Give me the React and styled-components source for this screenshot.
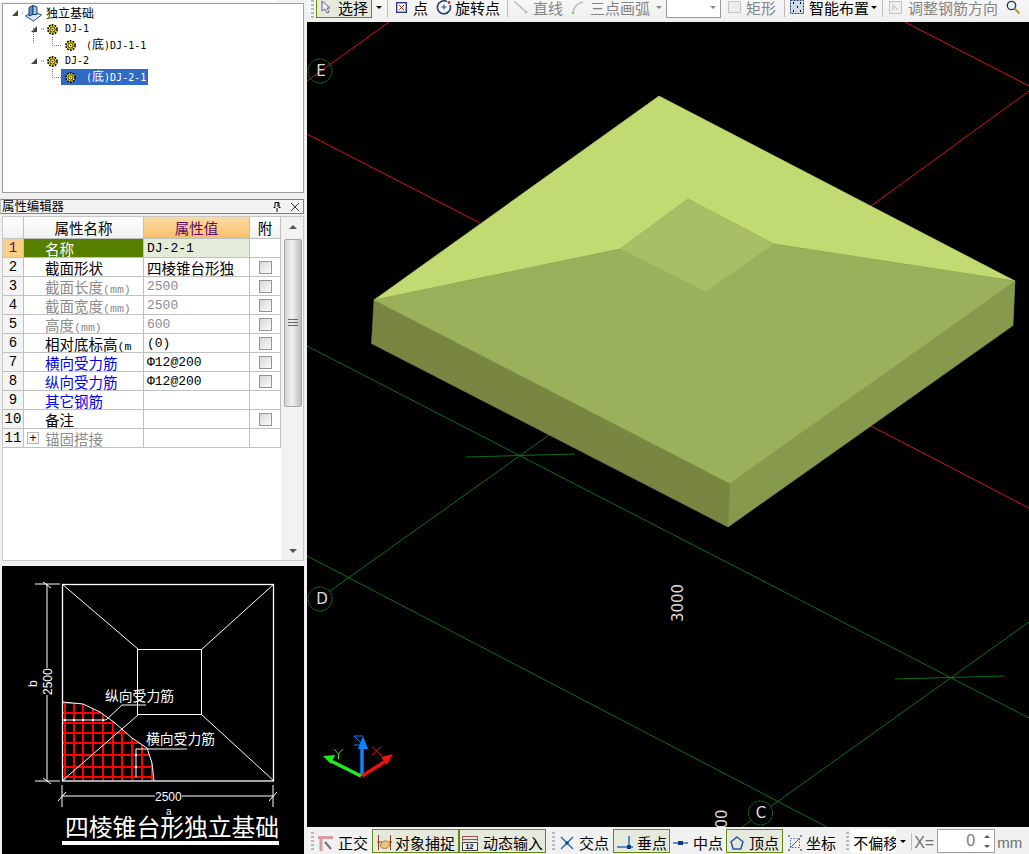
import React from 'react';
import styled, { createGlobalStyle } from 'styled-components';

const GlobalStyle = createGlobalStyle`
  html, body { margin: 0; padding: 0; background: #f0f0f0; overflow: hidden; }
  #root { width: 1029px; height: 854px; }
`;

const FONT = `"Noto Sans CJK SC", "DejaVu Sans", sans-serif`;
const MONO = `"Liberation Mono", "Noto Sans CJK SC", monospace`;
const LATIN = `"Liberation Sans", sans-serif`;

const Shell = styled.div`
  display: grid;
  grid-template-columns: 307px 722px;
  width: 1029px;
  height: 854px;
  overflow: hidden;
  font-family: ${FONT};
  color: #000;
`;

const Sidebar = styled.div`
  display: flex;
  flex-direction: column;
  background: #f0f0f0;
  padding-right: 3px;
  min-height: 0;
`;

const TopEdge = styled.div`
  width: 277px;
  height: 2px;
  margin-bottom: 1px;
  background: #fff;
  flex: none;
`;

const TreePanel = styled.div`
  height: 190px;
  margin-left: 2px;
  padding-top: 1px;
  box-sizing: border-box;
  background: #fff;
  border: 1px solid #a0a0a0;
  flex: none;
`;

const TreeRow = styled.div`
  display: flex;
  align-items: center;
  height: 16px;
  padding-left: ${p => p.$indent}px;
`;

const RootLabel = styled.span`
  margin-left: 4px;
  font-size: 12px;
  line-height: 16px;
`;

const TreeText = styled.span`
  margin-left: 7px;
  font: 10px/16px "DejaVu Sans Mono", monospace;
`;

const LeafBand = styled.span`
  display: flex;
  align-items: center;
  gap: 10px;
  height: 16px;
  margin-left: -1px;
  padding: 0 2px 0 4px;
  font: 10px/16px "DejaVu Sans Mono", monospace;
  background: ${p => p.$selected ? '#316ac5' : 'transparent'};
  color: ${p => p.$selected ? '#fff' : '#000'};
`;

const Cjk = styled.span`
  font: 12px/16px ${FONT};
`;

const ExpandMark = styled.svg`
  margin-right: 4px;
  flex: none;
`;

const LinkDots = styled.svg`
  margin-right: ${p => p.$gap}px;
  flex: none;
  overflow: visible;
`;

const PanelHeader = styled.div`
  display: flex;
  align-items: center;
  justify-content: space-between;
  height: 15px;
  margin-top: 6px;
  box-sizing: border-box;
  border: 1px solid #808080;
  border-left-color: #c4c4c4;
  background: #f3f3f3;
  padding: 0 4px 0 1px;
  font-size: 12.4px;
  line-height: 13px;
  flex: none;
`;

const HeaderIcons = styled.div`
  display: flex;
  gap: 10px;
  align-items: center;
`;

const GridFrame = styled.div`
  display: grid;
  grid-template-columns: 278px 1fr;
  height: 345px;
  margin-top: 2px;
  margin-left: 2px;
  background: #fff;
  border: 1px solid #c8c8c8;
  box-sizing: border-box;
  flex: none;
`;

const Table = styled.div`
  display: grid;
  grid-template-columns: 21px 120px 106px 31px;
  grid-template-rows: 22px;
  grid-auto-rows: 19px;
  align-content: start;
`;

const Cell = styled.div`
  display: flex;
  align-items: center;
  border-right: 1px solid #c0c0c0;
  border-bottom: 1px solid #c0c0c0;
  box-sizing: border-box;
  white-space: nowrap;
  overflow: hidden;
  font-size: 14.5px;
`;

const NumCell = styled(Cell)`
  justify-content: center;
  font-family: ${MONO};
  font-size: 14px;
  background: ${p => p.$active ? '#f8cf87' : '#f4f4f4'};
  color: ${p => p.$active ? '#5c0a6e' : '#000'};
`;

const toneColor = { blue: '#0000f0', gray: '#8c8c8c' };

const NameCell = styled(Cell)`
  padding-left: ${p => p.$expand ? '3px' : '21px'};
  gap: 6px;
  background: ${p => p.$active ? '#568000' : '#fff'};
  color: ${p => p.$active ? '#fff' : toneColor[p.$tone] || '#000'};
`;

const UnitSuffix = styled.span`
  font: 11.6px ${MONO};
`;

const ValueCell = styled(Cell)`
  padding-left: 3px;
  background: ${p => p.$active ? '#e3ebd9' : '#fff'};
  color: ${p => toneColor[p.$tone] || '#000'};
  font-family: ${p => p.$mono ? MONO : FONT};
  font-size: ${p => p.$mono ? '13px' : '14.5px'};
`;

const TickCell = styled(Cell)`
  justify-content: center;
`;

const HeadCell = styled(Cell)`
  justify-content: center;
  background: ${p => p.$accent ? 'linear-gradient(#fbdca6, #f6c069)' : 'linear-gradient(#fff, #f1f1f1)'};
  color: ${p => p.$accent ? '#5c0a6e' : '#000'};
`;

const Tick = styled.span`
  width: 13px;
  height: 13px;
  box-sizing: border-box;
  border: 1px solid #949494;
  background: linear-gradient(135deg, #d8d8d8, #fafafa);
`;

const Expander = styled.span`
  width: 12px;
  height: 12px;
  box-sizing: border-box;
  border: 1px solid #b8b8b8;
  background: #f4f4f4;
  color: #000;
  font: 12px/10px ${LATIN};
  text-align: center;
`;

const ScrollBar = styled.div`
  display: flex;
  flex-direction: column;
  align-items: center;
  background: #f2f2f2;
  padding: 0 0 7px 1px;
`;

const ScrollArrow = styled.span`
  width: 0;
  height: 0;
  margin: ${p => p.$down ? '0' : '8px 0 10px'};
  border-left: 4px solid transparent;
  border-right: 4px solid transparent;
  ${p => p.$down ? 'border-top: 4px solid #555;' : 'border-bottom: 4px solid #555;'}
`;

const ScrollThumb = styled.div`
  width: 18px;
  height: 168px;
  box-sizing: border-box;
  border: 1px solid #a8a8a8;
  border-radius: 2px;
  background: linear-gradient(90deg, #d4d4d4, #f0f0f0 45%, #bcbcbc);
  display: flex;
  align-items: center;
  justify-content: center;
`;

const ThumbGrip = styled.span`
  width: 10px;
  height: 8px;
  background: repeating-linear-gradient(#666 0 1px, transparent 1px 3px);
`;

const ScrollTrack = styled.div`
  flex: 1;
`;

const Preview = styled.div`
  height: 288px;
  margin-top: 5px;
  margin-left: 2px;
  background: #000;
  flex: none;
`;

const Main = styled.div`
  display: flex;
  flex-direction: column;
  min-width: 0;
`;

const TopBarRow = styled.div`
  display: flex;
  align-items: center;
  flex: none;
  height: 22px;
  box-sizing: border-box;
  padding-bottom: 8px;
  background: linear-gradient(#f7f7f7, #efefef);
  white-space: nowrap;
  font-size: 15px;
  overflow: hidden;
`;

const StatusRow = styled.div`
  display: flex;
  align-items: stretch;
  flex: none;
  height: 27px;
  box-sizing: border-box;
  padding: 2px 0 1px;
  background: #f1f1f1;
  white-space: nowrap;
  font-size: 15px;
  overflow: hidden;
`;

const Grip = styled.span`
  width: 3px;
  height: 18px;
  margin: auto ${p => p.$mr ?? 0}px auto ${p => p.$ml ?? 0}px;
  flex: none;
  background: repeating-linear-gradient(#b8b8b8 0 2px, transparent 2px 4px);
`;

const Tool = styled.span`
  display: flex;
  align-items: center;
  gap: ${p => p.$gap ?? 5}px;
  padding-left: ${p => p.$pl ?? 0}px;
  padding-right: ${p => p.$pr ?? 0}px;
  flex: none;
  color: ${p => p.$off ? '#858585' : '#000'};
  ${p => p.$on && 'background: #e6eadd; border: 1px solid #5f8a12;'}
`;

const TopTool = styled(Tool)`
  height: ${p => p.$on ? '22px' : 'auto'};
  box-sizing: border-box;
`;

const StatusTool = styled(Tool)`
  padding-top: 3px;
  box-sizing: border-box;
`;

const Divider = styled.span`
  width: 1px;
  height: 17px;
  margin: auto 5px;
  flex: none;
  background: #bdbdbd;
`;

const Caret = styled.span`
  width: 0;
  height: 0;
  flex: none;
  margin: auto 0 auto ${p => p.$ml ?? 0}px;
  border-left: 3px solid transparent;
  border-right: 3px solid transparent;
  border-top: 3px solid ${p => p.$off ? '#888' : '#000'};
`;

const ComboBox = styled.span`
  display: flex;
  align-items: center;
  justify-content: flex-end;
  width: 55px;
  height: 22px;
  margin-left: 4px;
  box-sizing: border-box;
  padding-right: 4px;
  border: 1px solid #9a9a9a;
  background: #fff;
  flex: none;
`;

const Viewport = styled.div`
  flex: 1;
  min-height: 0;
  background: #000;
`;

const Canvas = styled.svg`
  display: block;
  width: 722px;
  height: 805px;
`;

const BarGap = styled.span`
  width: 5px;
  flex: none;
`;

const OffsetSelect = styled.span`
  width: 45px;
  margin-left: 2px;
  padding: 3px 0 0 2px;
  box-sizing: border-box;
  background: #fff;
  overflow: hidden;
  flex: none;
`;

const NumberBox = styled.span`
  display: flex;
  align-items: center;
  justify-content: flex-end;
  gap: 8px;
  width: 58px;
  margin-left: 3px;
  box-sizing: border-box;
  border: 1px solid #a0a0a0;
  background: #fff;
  color: #7a7a7a;
  padding-right: 3px;
  font: 16px ${LATIN};
  flex: none;
`;

const Spinner = styled.span`
  display: flex;
  flex-direction: column;
  gap: 7px;
  width: 8px;
  align-items: center;
`;

const SpinUp = styled.span`
  width: 0;
  height: 0;
  border-left: 3px solid transparent;
  border-right: 3px solid transparent;
  border-bottom: 3px solid #555;
`;

const SpinDown = styled.span`
  width: 0;
  height: 0;
  border-left: 3px solid transparent;
  border-right: 3px solid transparent;
  border-top: 3px solid #555;
`;

const UnitText = styled.span`
  font: ${p => p.$size}px ${LATIN};
  color: #6e6e6e;
  margin: auto 0 auto ${p => p.$ml}px;
  padding-top: 3px;
`;

const Gear = () => (
  <svg width="11" height="11" viewBox="0 0 11 11" style={{ flex: 'none' }}>
    <circle cx="5.5" cy="5.5" r="4.6" fill="#ffe600" stroke="#000" strokeWidth="1.6" strokeDasharray="1.8 1.1" />
    <circle cx="5.5" cy="5.5" r="2.6" fill="#ffe600" stroke="#333" />
    <circle cx="5.5" cy="5.5" r="0.8" fill="#333" />
  </svg>
);

const Expand = () => (
  <ExpandMark width="6" height="6" viewBox="0 0 6 6"><path d="M0 6h6V0z" fill="#444" /></ExpandMark>
);

const CubeIcon = () => (
  <svg width="17" height="17" viewBox="0 0 17 17" style={{ flex: 'none' }}>
    <path d="M0.5 11l8-4.5 8 3.5-8 6z" fill="#dbe8f6" stroke="#1c4f8c" />
    <path d="M4 2.5l4-2v9l-4 1.5z" fill="#5c8fc8" stroke="#173f72" />
    <path d="M8 .5l4 1.5v7.5l-4 0z" fill="#a4c4e6" stroke="#173f72" />
  </svg>
);

const treeNodes = [
  { name: 'DJ-1', leaf: '-1-1', leafId: 'DJ', withTail: true },
  { name: 'DJ-2', leaf: '-2-1', leafId: 'DJ', selected: true },
];

const rows = [
  { n: 1, name: '名称', value: 'DJ-2-1', active: true, mono: true },
  { n: 2, name: '截面形状', value: '四棱锥台形独', tick: true },
  { n: 3, name: '截面长度', unit: '(mm)', value: '2500', tone: 'gray', valueMono: true, tick: true },
  { n: 4, name: '截面宽度', unit: '(mm)', value: '2500', tone: 'gray', valueMono: true, tick: true },
  { n: 5, name: '高度', unit: '(mm)', value: '600', tone: 'gray', valueMono: true, tick: true },
  { n: 6, name: '相对底标高', unit: '(m', value: '(0)', mono: true, tick: true },
  { n: 7, name: '横向受力筋', value: 'Φ12@200', tone: 'blue', tick: true, mono: true },
  { n: 8, name: '纵向受力筋', value: 'Φ12@200', tone: 'blue', tick: true, mono: true },
  { n: 9, name: '其它钢筋', value: '', tone: 'blue' },
  { n: 10, name: '备注', value: '', tick: true },
  { n: 11, name: '锚固搭接', value: '', tone: 'gray', expand: true },
];

function Tree() {
  return (
    <TreePanel>
      <TreeRow $indent={9}>
        <Expand />
        <LinkDots width="2" height="2" $gap={1}><path d="M0 1H2" stroke="#777" strokeDasharray="1 1" /></LinkDots>
        <CubeIcon />
        <RootLabel>独立基础</RootLabel>
      </TreeRow>
      {treeNodes.map(node => (
        <React.Fragment key={node.name}>
          <TreeRow $indent={28}>
            <Expand />
            <LinkDots width="4" height="2" $gap={2}><path d="M0 1H4" stroke="#777" strokeDasharray="1 1" /></LinkDots>
            <Gear />
            <TreeText>{node.name}</TreeText>
          </TreeRow>
          <TreeRow $indent={30}>
            <LinkDots width="29" height="16" $gap={0}>
              {node.withTail && <path d="M.5 -9V7" stroke="#777" strokeDasharray="1 1" />}
              <path d="M19.5 0V8.5H29" fill="none" stroke="#777" strokeDasharray="1 1" />
            </LinkDots>
            <LeafBand $selected={node.selected}>
              <Gear />
              <span>(<Cjk>底</Cjk>){node.leafId}{node.leaf}</span>
            </LeafBand>
          </TreeRow>
        </React.Fragment>
      ))}
    </TreePanel>
  );
}

function PropertyGrid() {
  return (
    <GridFrame>
      <Table>
        <HeadCell />
        <HeadCell>属性名称</HeadCell>
        <HeadCell $accent>属性值</HeadCell>
        <HeadCell>附</HeadCell>
        {rows.map(r => (
          <React.Fragment key={r.n}>
            <NumCell $active={r.active}>{r.n}</NumCell>
            <NameCell $active={r.active} $tone={r.tone} $expand={r.expand}>
              {r.expand && <Expander>+</Expander>}
              <span>{r.name}{r.unit && <UnitSuffix>{r.unit}</UnitSuffix>}</span>
            </NameCell>
            <ValueCell $active={r.active} $tone={r.value.startsWith('Φ') ? undefined : r.tone} $mono={r.mono || r.valueMono}>{r.value}</ValueCell>
            <TickCell>{r.tick && <Tick />}</TickCell>
          </React.Fragment>
        ))}
      </Table>
      <ScrollBar>
        <ScrollArrow />
        <ScrollThumb><ThumbGrip /></ScrollThumb>
        <ScrollTrack />
        <ScrollArrow $down />
      </ScrollBar>
    </GridFrame>
  );
}

// hatch lines of the rebar sample in the preview picture
const hatchV = [65, 74, 83, 93, 103, 113, 122, 132, 142, 152];
const hatchH = [703, 713, 723, 733, 743, 755, 767, 777];
const rebarEdge = 'M63 702L83 704L100 712L115 723L132 738L147 748L152 763L154 781';

function PreviewDrawing() {
  return (
    <svg width="302" height="288" viewBox="2 566 302 288" style={{ display: 'block' }}>
      <defs>
        <clipPath id="rebar">
          <path d={`${rebarEdge}H63Z`} />
        </clipPath>
      </defs>
      <g clipPath="url(#rebar)" stroke="#f00" strokeWidth="2">
        {hatchV.map(x => <path key={x} d={`M${x} 700V780`} />)}
        {hatchH.map(y => <path key={y} d={`M60 ${y}H160`} />)}
      </g>
      <g fill="none" stroke="#fff" strokeWidth="1">
        <rect x="62.5" y="584.5" width="211" height="196.5" strokeWidth="1.3" />
        <rect x="137.5" y="649.5" width="64" height="65" />
        <path d="M62 584l76 65M274 584l-72 65M62 781l76-66M274 781l-72-66" />
        <path d={rebarEdge} />
        <path d="M47 584v84M47 695v86M35 584h25M35 781h25M43 582l8 6M43 778l8 6" />
        <path d="M62 796h93M182 796h91M62 785v22M273 785v22M58 801l8-9M269 801l8-9" />
        <path d="M63 720h43l16-15h24M187 749h-51v28" />
      </g>
      <g fill="#fff">
        {hatchV.slice(0, 5).map(x => <circle key={x} cx={x} cy="720" r="1.2" />)}
        <circle cx="136" cy="755" r="1.2" />
        <circle cx="136" cy="767" r="1.2" />
      </g>
      <g fill="#fff" fontFamily={LATIN} fontSize="12">
        <text x="155" y="801">2500</text>
        <text x="166" y="815" fontSize="10">a</text>
        <text transform="translate(52 695) rotate(-90)">2500</text>
        <text transform="translate(37 687) rotate(-90)">b</text>
      </g>
      <g fill="#fff" fontFamily={FONT} fontSize="13.8">
        <text x="105" y="701">纵向受力筋</text>
        <text x="146" y="744">横向受力筋</text>
        <text x="65" y="836" fontSize="23.8">四棱锥台形独立基础</text>
      </g>
      <rect x="62" y="841" width="217" height="4" fill="#fff" />
    </svg>
  );
}

const faces = [
  { points: '371.5,343.5 728,527 730,483.5 374,300', fill: '#788642' },
  { points: '728,527 1013,325.5 1015,281 730,483.5', fill: '#86994c' },
  { points: '374,300 659,96 1015,281 774,244 688,199 620,249', fill: '#c1da71' },
  { points: '374,300 620,249 706,292 774,244 1015,281 730,483.5', fill: '#9bb05b' },
  { points: '620,249 688,199 774,244 706,292', fill: '#a9bf65' },
];

function Scene() {
  return (
    <Canvas viewBox="307 22 722 805">
      <g stroke="#d8101a" strokeWidth="1" fill="none">
        <path d="M389 22L307 81M905 22L1029 86M1029 91L871 206M307 134L480 223M871 426L1029 508" />
      </g>
      <g stroke="#0c6e18" strokeWidth="1" fill="none">
        <path d="M307 346L1029 718M307 556L827 827M330 591L549 435M742 827L1029 622" />
        <path d="M466 457L575 454M895 679L1004 676" />
      </g>
      {faces.map(f => (
        <polygon key={f.points} points={f.points} fill={f.fill} stroke={f.fill} strokeWidth="0.6" strokeLinejoin="round" />
      ))}
      <g fill="#000" stroke="#0f7a24" strokeDasharray="3 0.8">
        <circle cx="320" cy="71" r="12" fill="none" />
        <circle cx="320" cy="599" r="12" />
        <circle cx="760.5" cy="813" r="12" />
      </g>
      <g fill="#dcdcdc" fontFamily={`"DejaVu Sans", sans-serif`} fontSize="15" textAnchor="middle">
        <text x="321" y="76">E</text>
        <text x="322" y="604">D</text>
        <text x="761" y="818">C</text>
        <text transform="translate(683 603) rotate(-90)">3000</text>
        <text transform="translate(727 819) rotate(-90)">00</text>
      </g>
      <g fill="none" strokeWidth="3.5">
        <path d="M362 776V745" stroke="#0a84ff" />
        <path d="M361 776L331 761" stroke="#22e822" />
        <path d="M362 776L386 761" stroke="#f01010" />
      </g>
      <polygon points="363,736 358,749 368,749" fill="#0a84ff" />
      <polygon points="323,756 335,755 331,764" fill="#22e822" />
      <polygon points="393,754 381,757 387,765" fill="#f01010" />
      <g fill="none" strokeWidth="1">
        <path d="M363 736h-9l9 9h-9" stroke="#0a84ff" />
        <path d="M334 749l4.5 5 4.5-5M338.5 754v5" stroke="#22e822" />
        <path d="M372 747l9 8M381 747l-9 8" stroke="#f01010" />
      </g>
    </Canvas>
  );
}

function TopBar() {
  return (
    <TopBarRow>
      <Grip $ml={4} $mr={2} />
      <TopTool $on $pl={3} $pr={3} $gap={6}>
        <svg width="12" height="14" viewBox="0 0 12 14"><path d="M2 1v10l3-2 2 4 2-1-2-4h3z" fill="#eef" stroke="#667" /></svg>
        选择
      </TopTool>
      <Caret $ml={4} />
      <Divider />
      <TopTool $pl={3} $pr={3} $gap={6}>
        <svg width="11" height="11" viewBox="0 0 11 11"><rect x=".7" y=".7" width="9.6" height="9.6" fill="#fff" stroke="#2b3a8c" strokeWidth="1.4" /><path d="M3 3l5 5M8 3l-5 5" stroke="#c02020" /></svg>
        点
      </TopTool>
      <TopTool $pl={5} $pr={2} $gap={3}>
        <svg width="16" height="16" viewBox="0 0 16 16"><path d="M11 2.6A6.5 6.5 0 1 0 14 6" fill="none" stroke="#24446e" strokeWidth="1.6" /><path d="M8 5.5v5M5.5 8h5" stroke="#24446e" /><circle cx="13" cy="3.5" r="1.4" fill="#c03030" /></svg>
        旋转点
      </TopTool>
      <Divider />
      <TopTool $off $pr={8}>
        <svg width="15" height="14" viewBox="0 0 15 14"><path d="M1 1l12 11" stroke="#bdbdbd" strokeWidth="1.5" /><circle cx="13" cy="12" r="1.5" fill="#bdbdbd" /></svg>
        直线
      </TopTool>
      <TopTool $off>
        <svg width="14" height="14" viewBox="0 0 14 14"><path d="M2 13Q3 4 12 2" fill="none" stroke="#bdbdbd" strokeWidth="1.5" /><circle cx="2" cy="13" r="1.3" fill="#aaa" /></svg>
        三点画弧
      </TopTool>
      <Caret $off $ml={6} />
      <ComboBox><Caret $off /></ComboBox>
      <TopTool $off $pl={7} $pr={3}>
        <svg width="13" height="12" viewBox="0 0 13 12"><rect x=".5" y=".5" width="12" height="11" fill="#ececec" stroke="#c4c4c4" /></svg>
        矩形
      </TopTool>
      <Divider />
      <TopTool>
        <svg width="14" height="14" viewBox="0 0 14 14"><rect x=".5" y=".5" width="13" height="13" fill="#cfdcec" stroke="#24446e" strokeDasharray="2 1" /><path d="M3 3h1M10 3h1M7 7h1M3 11h1M10 11h1" stroke="#000" strokeWidth="2" /></svg>
        智能布置
      </TopTool>
      <Caret $ml={2} />
      <Divider />
      <TopTool $off $pl={1} $pr={8}>
        <svg width="14" height="14" viewBox="0 0 14 14"><rect x=".5" y="1.5" width="12" height="12" fill="#eee" stroke="#c4c4c4" /><path d="M4 10V5l5 5" fill="none" stroke="#bbb" /></svg>
        调整钢筋方向
      </TopTool>
      <svg width="15" height="15" viewBox="0 0 15 15" style={{ flex: 'none' }}><circle cx="5.5" cy="5.5" r="4.2" fill="#e4f2fb" stroke="#333" strokeWidth="1.3" /><path d="M8.5 8.5l5 5" stroke="#c09020" strokeWidth="2.2" /></svg>
    </TopBarRow>
  );
}

function StatusBar() {
  return (
    <StatusRow>
      <Grip $ml={4} />
      <StatusTool $pl={4} $pr={4}>
        <svg width="15" height="16" viewBox="0 0 15 16"><path d="M0 2.5h15M3 2.5V16" stroke="#d99c9c" strokeWidth="3" fill="none" /><path d="M7 7l6 7" stroke="#6a7080" strokeWidth="2" /></svg>
        正交
      </StatusTool>
      <StatusTool $on $pl={4} $pr={3} $gap={3}>
        <svg width="15" height="17" viewBox="0 0 15 17"><path d="M1.5 1v15M13.5 1v15M0 8h15" stroke="#8a3a20" /><path d="M3 12c2-7 9-6 10-2-1 5-7 6-10 2z" fill="#e6c67a" stroke="#a08040" /></svg>
        对象捕捉
      </StatusTool>
      <StatusTool $on $pl={2} $pr={2}>
        <svg width="16" height="16" viewBox="0 0 16 16"><path d="M0 1.5h16M0 4.5h16M.5 1v5M15.5 1v5" stroke="#a05050" fill="none" /><rect x=".5" y="7.5" width="15" height="8" fill="#eee" stroke="#444" /><text x="3.5" y="14" fontFamily={LATIN} fontSize="7" fontWeight="700">12</text></svg>
        动态输入
      </StatusTool>
      <BarGap />
      <Grip $ml={1} />
      <StatusTool $pl={5} $pr={4}>
        <svg width="14" height="14" viewBox="0 0 14 14"><path d="M1 1l12 12M13 1L1 13" stroke="#2a70c0" strokeWidth="1.5" /><rect x="5.5" y="5.5" width="3" height="3" fill="#123a80" /></svg>
        交点
      </StatusTool>
      <StatusTool $on $pl={3} $pr={2} $gap={4}>
        <svg width="16" height="16" viewBox="0 0 16 16"><path d="M0 12h16M12 1v11" stroke="#2a70c0" strokeWidth="1.5" /><rect x="10" y="10" width="4" height="4" fill="#123a80" /></svg>
        垂点
      </StatusTool>
      <StatusTool $pl={3} $pr={3}>
        <svg width="15" height="8" viewBox="0 0 15 8"><path d="M0 4h15" stroke="#2a70c0" strokeWidth="1.5" /><rect x="5" y="2" width="5" height="4" fill="#123a80" /></svg>
        中点
      </StatusTool>
      <StatusTool $on $pl={3} $pr={3}>
        <svg width="14" height="14" viewBox="0 0 14 14"><path d="M7 1l6 4.7-2.2 7.3H3.2L1 5.7z" fill="none" stroke="#2a5aa8" strokeWidth="1.5" /></svg>
        顶点
      </StatusTool>
      <StatusTool $pl={4} $pr={10} $gap={3}>
        <svg width="16" height="16" viewBox="0 0 16 16"><rect x="3.5" y="3.5" width="9" height="9" fill="none" stroke="#2a70c0" strokeDasharray="1.5 1.5" /><path d="M3 13l10-10" stroke="#2a70c0" /><path d="M1 1h2M13 1h2M1 15h2M13 15h2" stroke="#222" /></svg>
        坐标
      </StatusTool>
      <Grip />
      <OffsetSelect>不偏移</OffsetSelect>
      <Caret $ml={4} />
      <Divider />
      <UnitText $size={16} $ml={-3}>X=</UnitText>
      <NumberBox>
        0
        <Spinner><SpinUp /><SpinDown /></Spinner>
      </NumberBox>
      <UnitText $size={15} $ml={2}>mm</UnitText>
    </StatusRow>
  );
}

export default function App() {
  return (
    <>
      <GlobalStyle />
      <Shell>
        <Sidebar>
          <TopEdge />
          <Tree />
          <PanelHeader>
            <span>属性编辑器</span>
            <HeaderIcons>
              <svg width="8" height="10" viewBox="0 0 8 10"><path d="M2 .5h4v5h1.5M.5 5.5H2v-5M4 6v4M5 1v4" stroke="#000" fill="none" /></svg>
              <svg width="8" height="8" viewBox="0 0 8 8"><path d="M0 0l8 8M8 0L0 8" stroke="#333" /></svg>
            </HeaderIcons>
          </PanelHeader>
          <PropertyGrid />
          <Preview><PreviewDrawing /></Preview>
        </Sidebar>
        <Main>
          <TopBar />
          <Viewport><Scene /></Viewport>
          <StatusBar />
        </Main>
      </Shell>
    </>
  );
}
